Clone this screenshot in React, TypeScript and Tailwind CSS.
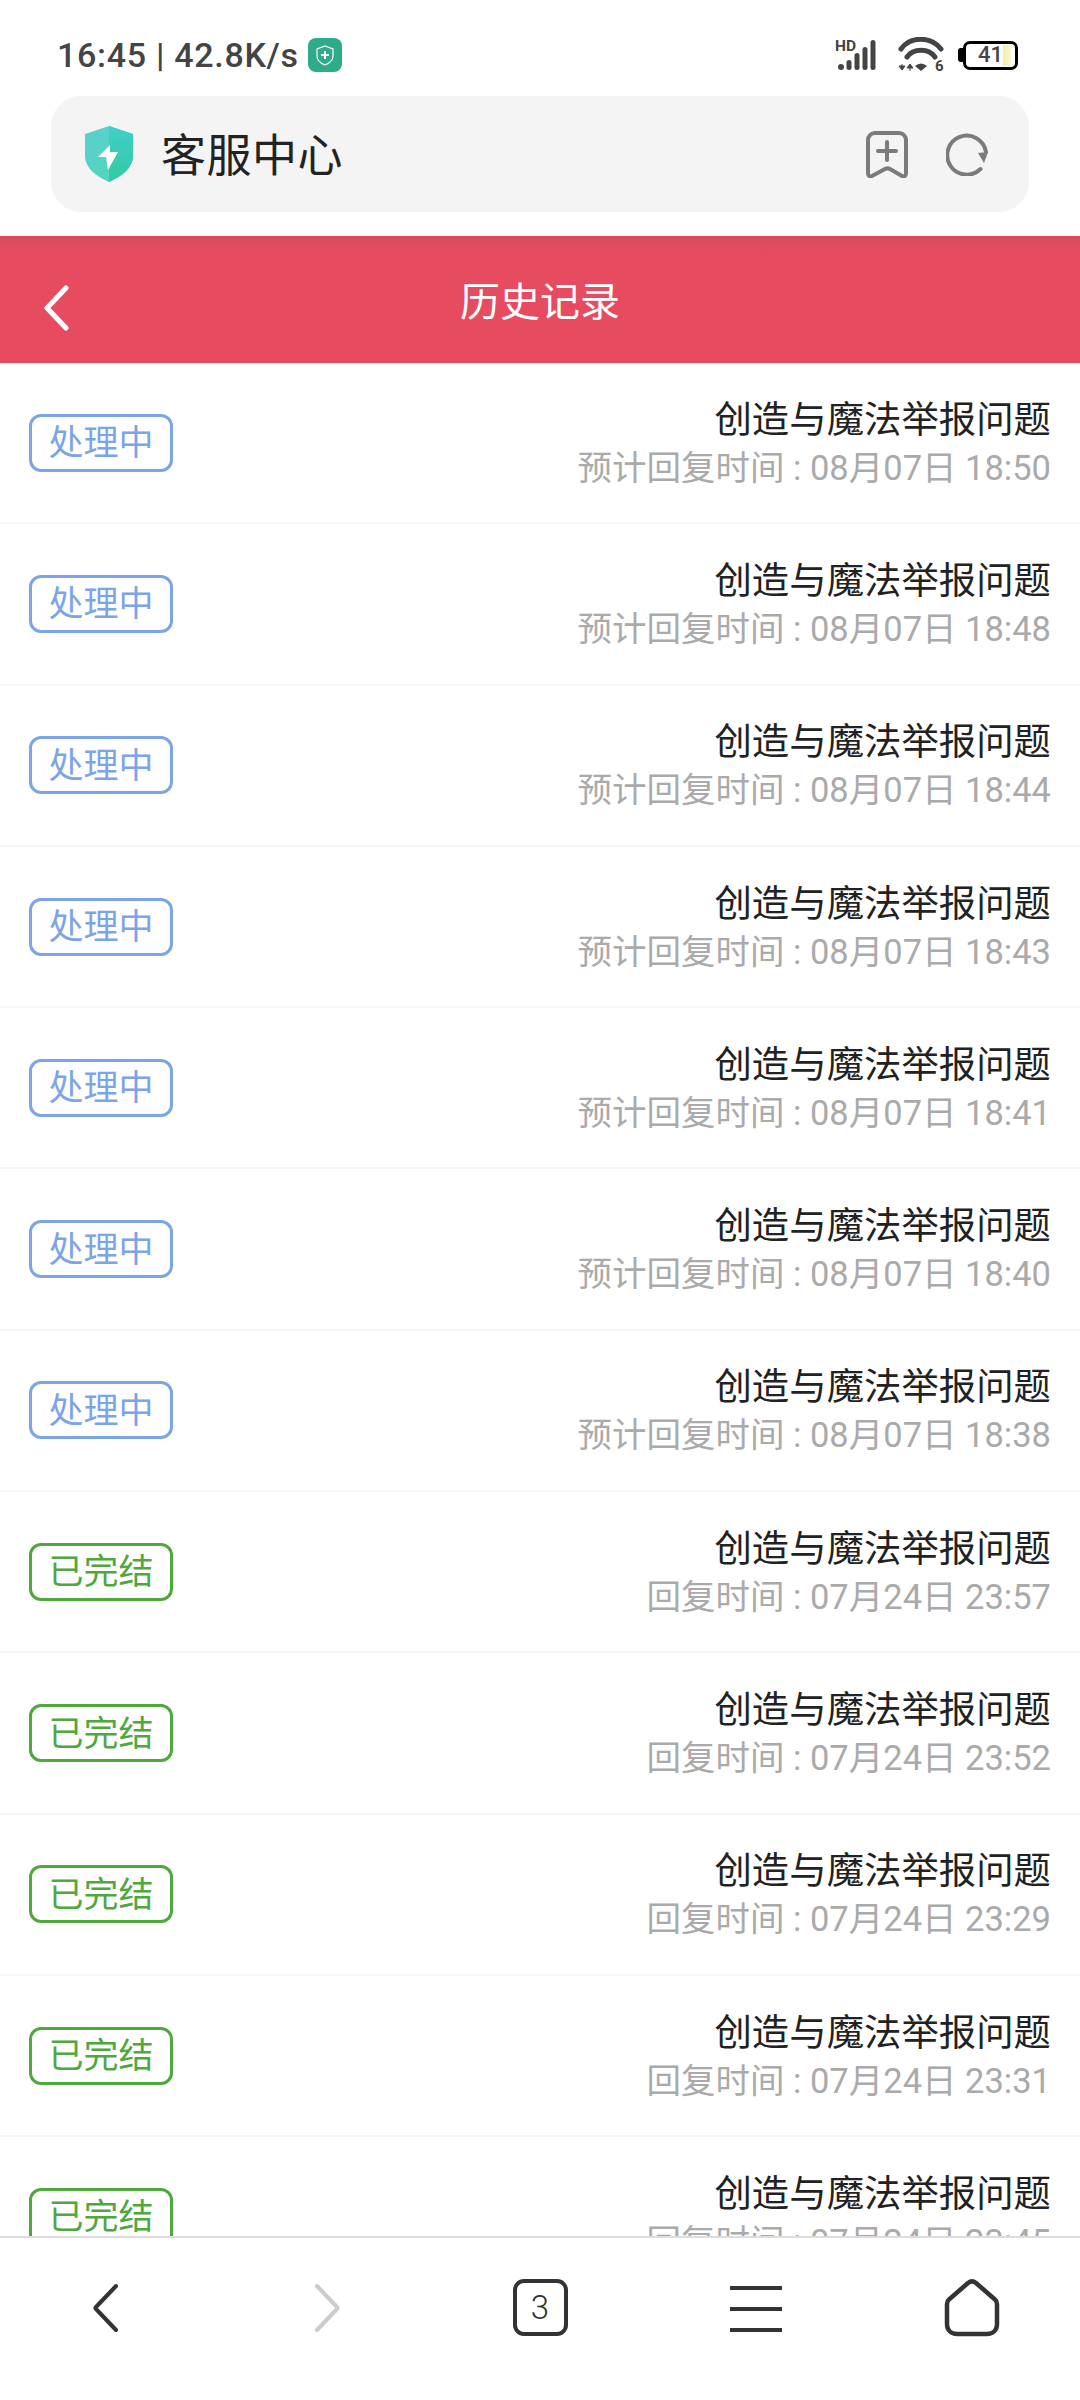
import React from "react";

const ui = { fontFamily: 'Roboto, "Noto Sans CJK SC", sans-serif' };

const records = [
  { done: false, label: "预计回复时间", time: "08月07日 18:50" },
  { done: false, label: "预计回复时间", time: "08月07日 18:48" },
  { done: false, label: "预计回复时间", time: "08月07日 18:44" },
  { done: false, label: "预计回复时间", time: "08月07日 18:43" },
  { done: false, label: "预计回复时间", time: "08月07日 18:41" },
  { done: false, label: "预计回复时间", time: "08月07日 18:40" },
  { done: false, label: "预计回复时间", time: "08月07日 18:38" },
  { done: true, label: "回复时间", time: "07月24日 23:57" },
  { done: true, label: "回复时间", time: "07月24日 23:52" },
  { done: true, label: "回复时间", time: "07月24日 23:29" },
  { done: true, label: "回复时间", time: "07月24日 23:31" },
  { done: true, label: "回复时间", time: "07月24日 23:45" },
];

function StatusBar() {
  return (
    <div className="h-[96px] flex items-start justify-between pl-[57px] pr-[62px] pt-[38px]">
      <div className="flex items-center h-[34px] text-[#444] text-[34px] leading-none font-medium tracking-[0.7px]">
        <span>16:45 | 42.8K/s</span>
        <svg className="ml-[9px]" width="34" height="34" viewBox="0 0 34 34">
          <rect width="34" height="34" rx="8" fill="#2eab88" />
          <path d="M17 8l8 3v7c0 4-3 7-8 9-5-2-8-5-8-9v-7z" fill="none" stroke="#fff" strokeWidth="1.2" />
          <path d="M17 13v8M13 17h8" stroke="#fff" strokeWidth="2" />
        </svg>
      </div>
      <div className="flex items-center h-[34px]">
        <svg width="44" height="34" viewBox="0 0 44 34">
          <text x="0" y="13" fontSize="15.5" fontWeight="700" fill="#444" fontFamily="Roboto">HD</text>
          <circle cx="6" cy="29" r="3" fill="#444" />
          <rect x="11.500" y="22" width="5" height="10" rx="2.500" fill="#444" />
          <rect x="19.500" y="15" width="5" height="17" rx="2.500" fill="#444" />
          <rect x="27.500" y="9" width="5" height="23" rx="2.500" fill="#444" />
          <rect x="35.500" y="2" width="5" height="30" rx="2.500" fill="#444" />
        </svg>
        <svg className="ml-[19px] mt-[4px]" width="48" height="40" viewBox="0 0 48 40">
          <path d="M3 12C12 -1 33 -1 43 12" fill="none" stroke="#444" strokeWidth="5" strokeLinecap="round" />
          <path d="M9 20C15 11 31 11 37 20" fill="none" stroke="#444" strokeWidth="5" strokeLinecap="round" />
          <path d="M17 29Q23 24 29 29L23 34z" fill="#444" />
          <path d="M1 29l3 4 3-4zM4 27v4M9 31l3-4 3 4zM12 29v5" fill="#444" stroke="#444" strokeWidth="1" />
          <text x="37" y="34" fontSize="15" fontWeight="700" fill="#444" fontFamily="Roboto">6</text>
        </svg>
        <div className="ml-[12px] flex items-center">
          <div className="w-[5px] h-[14px] rounded-l-[3px] bg-black" />
          <div className="w-[55px] h-[29px] border-[3px] border-black rounded-[7px] flex items-center justify-end pr-[4px] py-[1px]">
            <span className="text-[#444] text-[22px] leading-none font-medium">41</span>
            <div className="w-[8px] h-full bg-linear-to-r from-[#f6eca4] to-[#fbf6d8]" />
          </div>
        </div>
      </div>
    </div>
  );
}

function AddressBar() {
  return (
    <div className="mx-[51px] h-[116px] bg-[#f4f4f4] rounded-[30px] flex items-center pl-[33px] pr-[39px]">
      <svg width="50" height="56" viewBox="0 0 50 56">
        <defs>
          <linearGradient id="shield" x1="0" y1="0" x2="0.6" y2="1">
            <stop offset="0" stopColor="#5ccfd2" />
            <stop offset="1" stopColor="#4fd6b8" />
          </linearGradient>
          <linearGradient id="shieldRight" x1="0" y1="0" x2="0" y2="1">
            <stop offset="0" stopColor="#3fd0c8" />
            <stop offset="1" stopColor="#34c9a4" />
          </linearGradient>
        </defs>
        <path d="M25 0l24 8v22c0 11-10 20-24 26C11 50 1 41 1 30V8z" fill="url(#shield)" />
        <path d="M25 0l24 8v22c0 11-10 20-24 26z" fill="url(#shieldRight)" />
        <path d="M26 19L14 31h8l2 13 10-18h-8z" fill="#fff" />
      </svg>
      <span className="ml-[27px] mt-[4px] text-[45px] leading-none text-[#222] tracking-[0.5px]">客服中心</span>
      <svg className="ml-auto" width="42" height="47" viewBox="0 0 42 47" fill="none" stroke="#7b7b7b" strokeWidth="4">
        <path d="M2 9a7 7 0 0 1 7-7h24a7 7 0 0 1 7 7v33c0 3-2 4-4 3l-12-7c-2-1-3-1-5 0L6 45c-2 1-4 0-4-3z" strokeLinejoin="round" />
        <path d="M21 11v18M12 20h18" strokeLinecap="round" />
      </svg>
      <svg className="ml-[38px]" width="44" height="44" viewBox="0 0 44 44" fill="none">
        <path d="M34.500 37A19.500 19.500 0 1 1 40 20" stroke="#7b7b7b" strokeWidth="4" strokeLinecap="round" />
        <path d="M32 21l10-1-4 11z" fill="#7b7b7b" />
      </svg>
    </div>
  );
}

function PageHeader() {
  return (
    <div className="relative mt-[24px] h-[127px] bg-linear-to-b from-[#d94a5d] to-[#e64b5f] to-[12%] flex items-center justify-center">
      <svg className="absolute left-[41px] top-[49px]" width="30" height="46" viewBox="0 0 30 46" fill="none">
        <path d="M25 3L6 23l19 20" stroke="#fff" strokeWidth="5" strokeLinecap="round" strokeLinejoin="round" />
      </svg>
      <span className="text-white text-[40px] leading-none mt-[7px]">历史记录</span>
    </div>
  );
}

function Row({ done, label, time }: { done: boolean; label: string; time: string }) {
  return (
    <div className="h-[161.3px] shrink-0 border-b-2 border-[#f6f6f6] pl-[29px] pr-[29px] flex items-center justify-between">
      <div
        className={
          done
            ? "w-[144px] h-[58px] border-[3px] rounded-[12px] flex items-center justify-center pt-[2px] text-[35px] leading-none border-[#4fa83d] text-[#4fa83d]"
            : "w-[144px] h-[58px] border-[3px] rounded-[12px] flex items-center justify-center pt-[2px] text-[35px] leading-none border-[#7ba4e9] text-[#7ba4e9]"
        }
      >
        {done ? "已完结" : "处理中"}
      </div>
      <div className="flex flex-col items-end">
        <div className="text-[37.400px] leading-[48px] pt-[2px] text-[#222]">创造与魔法举报问题</div>
        <div className="text-[34.500px] leading-[48px] text-[#aaaaaa]">
          {label} : {time}
        </div>
      </div>
    </div>
  );
}

function BottomNav() {
  return (
    <div className="h-[164px] shrink-0 bg-white border-t-2 border-[#dddddd] grid grid-cols-5 items-start pt-[41px]">
      <div className="flex justify-center">
        <svg width="60" height="56" viewBox="0 0 60 56" fill="none">
          <path d="M38 7L18 28Q17 29 18 30L38 51" stroke="#333" strokeWidth="4" strokeLinecap="round" strokeLinejoin="round" />
        </svg>
      </div>
      <div className="flex justify-center">
        <svg width="60" height="56" viewBox="0 0 60 56" fill="none">
          <path d="M23 7L43 28Q44 29 43 30L23 51" stroke="#cccccc" strokeWidth="4" strokeLinecap="round" strokeLinejoin="round" />
        </svg>
      </div>
      <div className="flex justify-center">
        <div className="w-[55px] h-[57px] border-[4px] border-[#333] rounded-[11px] flex items-center justify-center text-[33px] font-light leading-none text-[#333]">
          3
        </div>
      </div>
      <div className="flex flex-col items-center gap-[17px] pt-[7px]">
        <div className="w-[52px] h-[4px] bg-[#333]" />
        <div className="w-[52px] h-[4px] bg-[#333]" />
        <div className="w-[52px] h-[4px] bg-[#333]" />
      </div>
      <div className="flex justify-center">
        <svg width="56" height="58" viewBox="0 0 56 58" fill="none">
          <path d="M3 25c0-2 .8-3.500 2-4.500L24 4c2.500-2 5.500-2 8 0l19 16.500c1.200 1 2 2.500 2 4.500v20c0 6-4 10-10 10H13C7 55 3 51 3 45z" stroke="#333" strokeWidth="4.500" strokeLinejoin="round" />
        </svg>
      </div>
    </div>
  );
}

export default function App() {
  return (
    <div className="w-[1080px] h-[2400px] bg-white flex flex-col overflow-hidden" style={ui}>
      <StatusBar />
      <AddressBar />
      <PageHeader />
      <div className="flex-1 min-h-0 overflow-hidden flex flex-col">
        {records.map((r) => (
          <Row key={r.time} done={r.done} label={r.label} time={r.time} />
        ))}
      </div>
      <BottomNav />
    </div>
  );
}
